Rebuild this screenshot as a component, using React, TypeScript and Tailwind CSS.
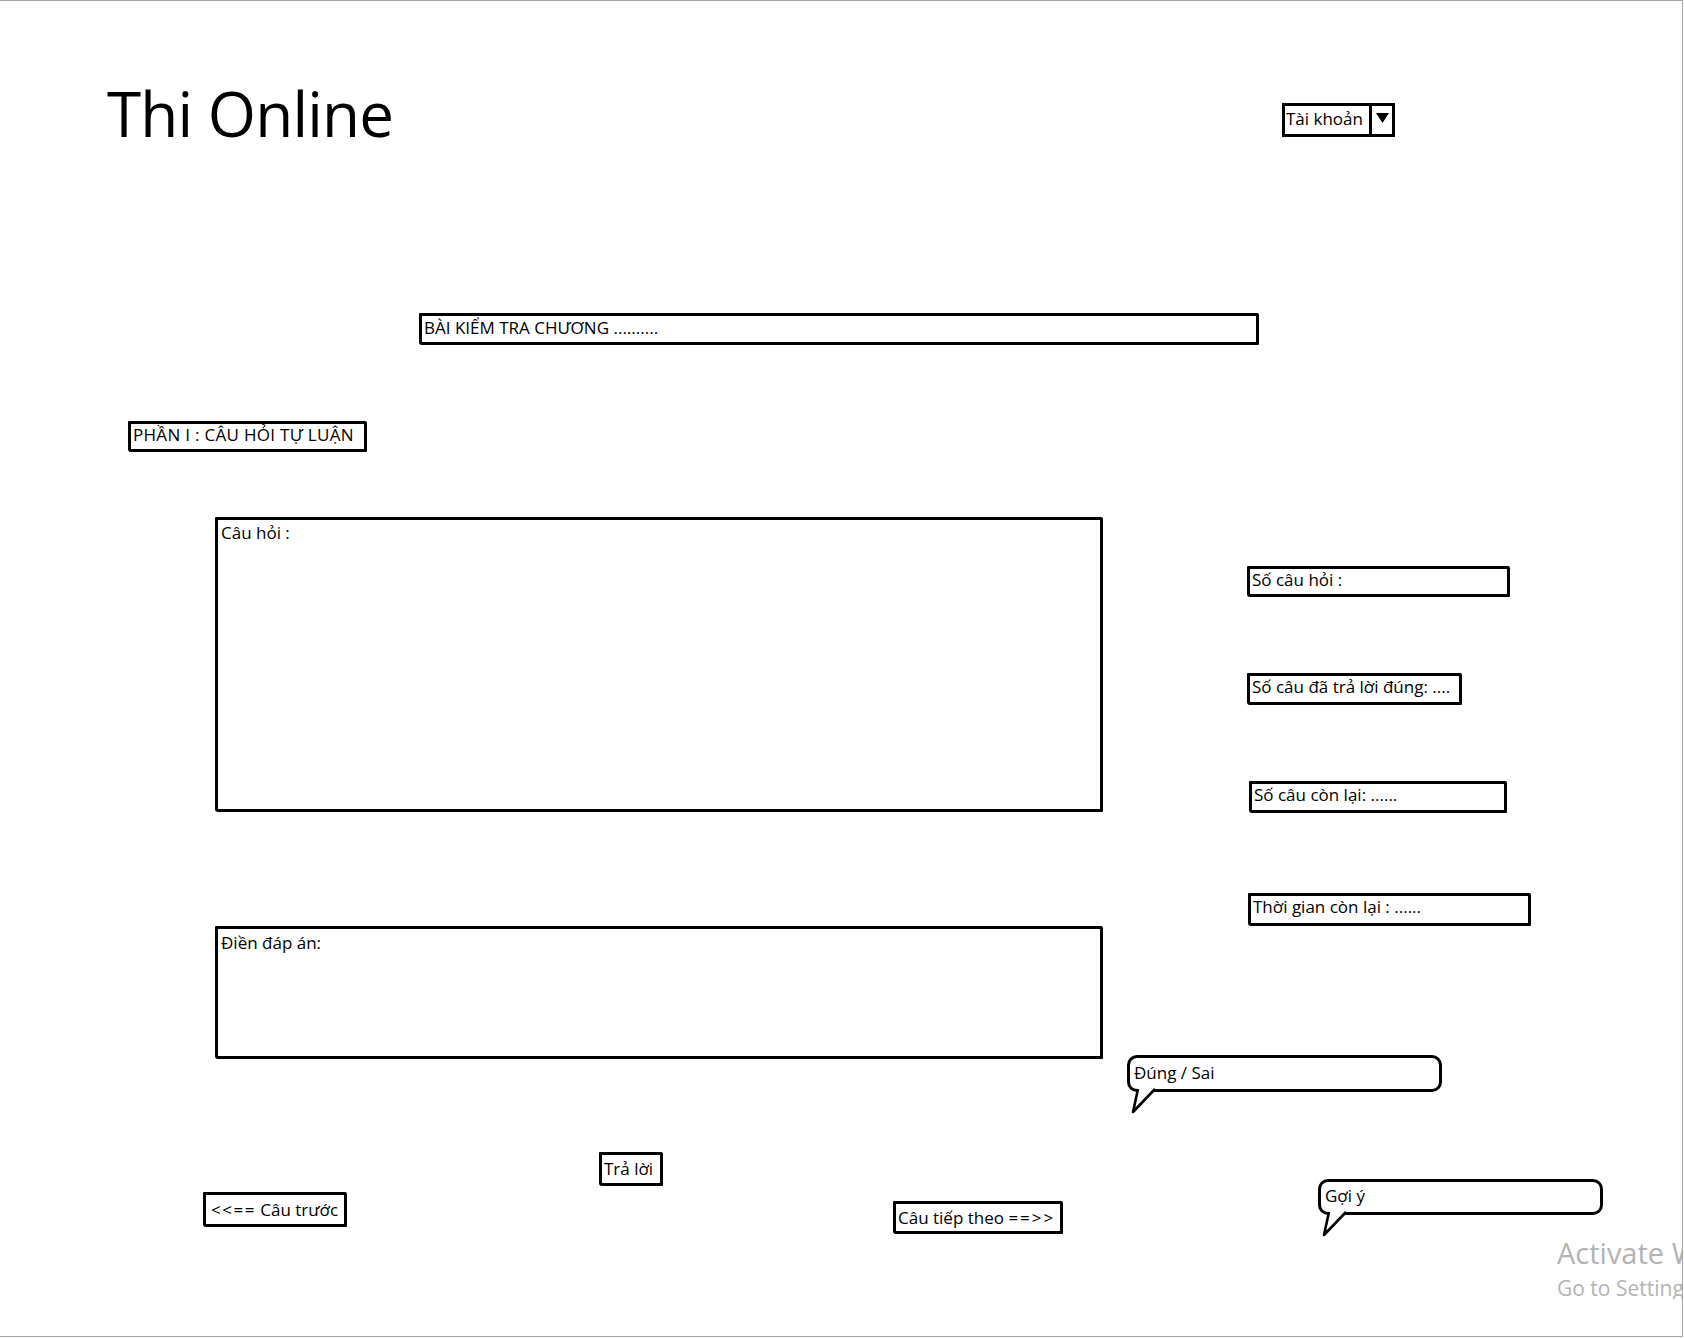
import React from "react";

// hand-drawn looking box used all over the wireframe
const Box = ({
  className = "",
  children,
}: {
  className?: string;
  children?: React.ReactNode;
}) => (
  <div
    className={`shrink-0 border-[3px] border-black bg-white pl-[2px] text-[17px] leading-[22px] text-black rounded-[1px_2px_1px_3px] ${className}`}
  >
    {children}
  </div>
);

const Bubble = ({ className = "", label }: { className?: string; label: string }) => (
  <div className={`relative shrink-0 ${className}`}>
    <div className="flex h-full items-center rounded-[10px] border-[3px] border-black bg-white pl-[4px] pb-[2px] text-[17px] leading-[22px]">
      {label}
    </div>
    {/* tail of the speech bubble */}
    <svg className="absolute left-0 top-full -mt-[4px]" width="32" height="27" viewBox="0 0 32 27">
      <polygon points="11,0 6,24 28,0" fill="white" stroke="none" />
      <polyline points="11,1 6,24 28,1" fill="none" stroke="black" strokeWidth="2.6" strokeLinejoin="round" />
    </svg>
  </div>
);

export default function App() {
  return (
    <div className="relative h-[1338px] w-[1684px] overflow-hidden bg-white font-['Open_Sans','Noto_Sans',sans-serif] text-black">
      <div className="h-[1337px] w-[1683px] border-b border-r border-t border-[#a5a5a5]">
        {/* header */}
        <div className="flex h-[312px] items-start pl-[107px] pt-[81px]">
          <h1 className="text-[62px] leading-none tracking-[-0.8px]">Thi Online</h1>
          <div className="ml-auto mr-[287px] mt-[21px] flex h-[34px] w-[113px] border-[3px] border-black">
            <span className="flex-1 pl-[1px] pt-[2px] text-[17px] leading-[22px]">Tài khoản</span>
            <span className="flex w-[23px] items-start justify-center border-l-[3px] border-black pt-[7px]">
              <svg width="13" height="10" viewBox="0 0 13 10">
                <polygon points="0,0 13,0 6.5,10" fill="black" />
              </svg>
            </span>
          </div>
        </div>

        <Box className="ml-[419px] h-[32px] w-[840px] pt-[1px]">BÀI KIỂM TRA CHƯƠNG ..........</Box>

        <Box className="ml-[128px] mt-[76px] h-[31px] w-[239px] tracking-[0.3px]">PHẦN I : CÂU HỎI TỰ LUẬN</Box>

        {/* question + stats */}
        <div className="mt-[65px] flex items-start">
          <Box className="ml-[215px] h-[295px] w-[888px] pl-[3px] pt-[2px]">Câu hỏi :</Box>
          <div className="ml-[144px] mt-[49px] flex flex-col">
            <Box className="h-[31px] w-[263px]">Số câu hỏi :</Box>
            <Box className="mt-[76px] h-[32px] w-[215px]">Số câu đã trả lời đúng: ....</Box>
            <Box className="ml-[2px] mt-[76px] h-[32px] w-[258px]">Số câu còn lại: ......</Box>
            <Box className="ml-[1px] mt-[80px] h-[33px] w-[283px]">Thời gian còn lại : ......</Box>
          </div>
        </div>

        {/* answer + result */}
        <div className="flex items-start">
          <Box className="ml-[215px] h-[133px] w-[888px] pl-[3px] pt-[3px]">Điền đáp án:</Box>
          <Bubble className="ml-[24px] mt-[129px] h-[37px] w-[315px]" label="Đúng / Sai" />
        </div>

        {/* navigation */}
        <div className="mt-[60px] flex items-start">
          <Box className="ml-[203px] mt-[40px] flex h-[35px] w-[144px] items-center pl-[5px]">
            <span className="tracking-[1.5px]">&lt;&lt;==</span>&nbsp;Câu trước
          </Box>
          <Box className="ml-[252px] flex h-[34px] w-[64px] items-center pl-[2px]">Trả lời</Box>
          <Box className="ml-[230px] mt-[49px] flex h-[33px] w-[170px] items-center">
            Câu tiếp theo&nbsp;<span className="tracking-[2px]">==&gt;&gt;</span>
          </Box>
          <Bubble className="ml-[255px] mt-[27px] h-[36px] w-[285px]" label="Gợi ý" />
        </div>
      </div>

      {/* windows watermark, cut off by the window edge */}
      <div className="absolute left-[1557px] top-[1238px] w-[125px] overflow-hidden whitespace-nowrap text-[#b3b3b3]">
        <div className="text-[29px] leading-none">Activate Windows</div>
        <div className="mt-[11px] text-[21px] leading-none">Go to Settings to activate Windows.</div>
      </div>
    </div>
  );
}
